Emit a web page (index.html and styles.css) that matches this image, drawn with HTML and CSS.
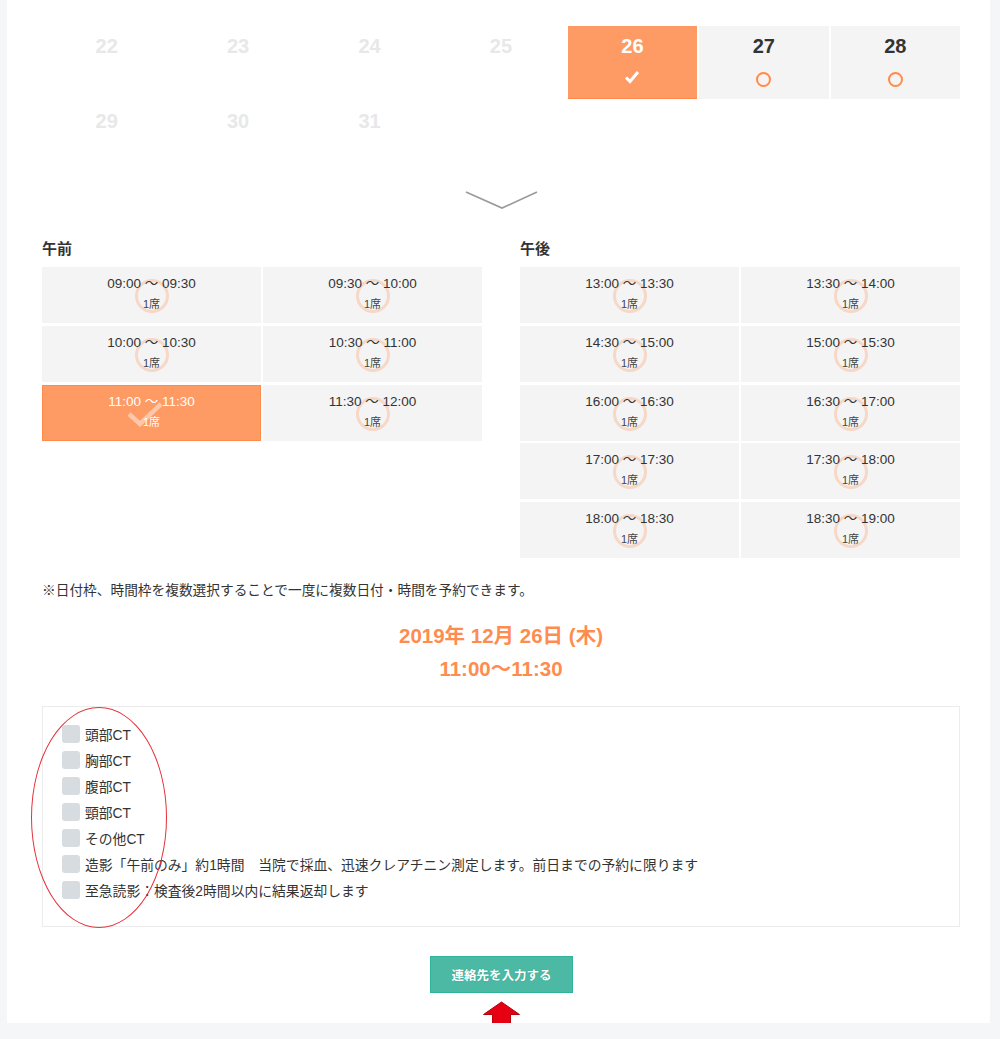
FILE: index.html
```html
<!DOCTYPE html>
<html lang="ja">
<head>
<meta charset="utf-8">
<title>予約</title>
<link rel="stylesheet" href="styles.css">
</head>
<body>
<div class="panel">
  <div class="calendar">
    <div class="day off"><span class="num">22</span></div>
    <div class="day off"><span class="num">23</span></div>
    <div class="day off"><span class="num">24</span></div>
    <div class="day off"><span class="num">25</span></div>
    <div class="day selected"><span class="num">26</span>
      <svg class="mark" width="16" height="14" viewBox="0 0 16 14"><path d="M2 7.5 L6 11.5 L14 2" fill="none" stroke="#fff" stroke-width="3"/></svg>
    </div>
    <div class="day open"><span class="num">27</span><span class="ring"></span></div>
    <div class="day open"><span class="num">28</span><span class="ring"></span></div>
    <div class="day off"><span class="num">29</span></div>
    <div class="day off"><span class="num">30</span></div>
    <div class="day off"><span class="num">31</span></div>
  </div>

  <div class="chevron">
    <svg width="74" height="20" viewBox="0 0 74 20"><path d="M1 2 L37 18 L72 2" fill="none" stroke="#9a9a9a" stroke-width="1.6"/></svg>
  </div>

  <div class="periods">
    <section class="period">
      <h3 class="period-title">午前</h3>
      <div class="slots">
        <div class="slot"><span class="time">09:00 〜 09:30</span><span class="seat">1席</span></div>
        <div class="slot"><span class="time">09:30 〜 10:00</span><span class="seat">1席</span></div>
        <div class="slot"><span class="time">10:00 〜 10:30</span><span class="seat">1席</span></div>
        <div class="slot"><span class="time">10:30 〜 11:00</span><span class="seat">1席</span></div>
        <div class="slot chosen"><span class="time">11:00 〜 11:30</span><span class="seat">1席</span>
          <svg class="bigcheck" width="44" height="30" viewBox="0 0 44 30"><path d="M3 12 L14 22 L35 2" fill="none" stroke="rgba(255,255,255,0.45)" stroke-width="4.5"/></svg>
        </div>
        <div class="slot"><span class="time">11:30 〜 12:00</span><span class="seat">1席</span></div>
      </div>
    </section>
    <section class="period">
      <h3 class="period-title">午後</h3>
      <div class="slots">
        <div class="slot"><span class="time">13:00 〜 13:30</span><span class="seat">1席</span></div>
        <div class="slot"><span class="time">13:30 〜 14:00</span><span class="seat">1席</span></div>
        <div class="slot"><span class="time">14:30 〜 15:00</span><span class="seat">1席</span></div>
        <div class="slot"><span class="time">15:00 〜 15:30</span><span class="seat">1席</span></div>
        <div class="slot"><span class="time">16:00 〜 16:30</span><span class="seat">1席</span></div>
        <div class="slot"><span class="time">16:30 〜 17:00</span><span class="seat">1席</span></div>
        <div class="slot"><span class="time">17:00 〜 17:30</span><span class="seat">1席</span></div>
        <div class="slot"><span class="time">17:30 〜 18:00</span><span class="seat">1席</span></div>
        <div class="slot"><span class="time">18:00 〜 18:30</span><span class="seat">1席</span></div>
        <div class="slot"><span class="time">18:30 〜 19:00</span><span class="seat">1席</span></div>
      </div>
    </section>
  </div>

  <p class="note">※日付枠、時間枠を複数選択することで一度に複数日付・時間を予約できます。</p>

  <div class="summary">
    <div>2019年 12月 26日 (木)</div>
    <div>11:00〜11:30</div>
  </div>

  <div class="options">
    <label class="opt"><span class="box"></span>頭部CT</label>
    <label class="opt"><span class="box"></span>胸部CT</label>
    <label class="opt"><span class="box"></span>腹部CT</label>
    <label class="opt"><span class="box"></span>頸部CT</label>
    <label class="opt"><span class="box"></span>その他CT</label>
    <label class="opt"><span class="box"></span>造影「午前のみ」約1時間　当院で採血、迅速クレアチニン測定します。前日までの予約に限ります</label>
    <label class="opt"><span class="box"></span>至急読影：検査後2時間以内に結果返却します</label>
    <span class="ellipse"></span>
  </div>

  <div class="actions">
    <button class="submit">連絡先を入力する</button>
    <svg class="arrow" width="39" height="30" viewBox="0 0 39 30"><path d="M19.5 1 L37.5 13.5 L28.5 13.5 L28.5 29 L10.5 29 L10.5 13.5 L1.5 13.5 Z" fill="#e60012" stroke="#b8000e" stroke-width="1"/></svg>
  </div>
</div>
</body>
</html>
```
FILE: styles.css
```css
html, body {
  margin: 0;
  padding: 0;
}
body {
  background: #f5f6f8;
  font-family: "Liberation Sans", "Noto Sans CJK JP", sans-serif;
  color: #333;
}
.panel {
  margin-left: 7px;
  width: 983px;
  box-sizing: border-box;
  background: #fff;
  padding: 26px 30px 30px 35px;
}

/* calendar */
.calendar {
  display: grid;
  grid-template-columns: repeat(7, 1fr);
  grid-auto-rows: 73px;
  gap: 2px;
}
.day {
  display: flex;
  flex-direction: column;
  align-items: center;
  padding-top: 9px;
  box-sizing: border-box;
}
.num {
  font-size: 20px;
  line-height: 22px;
  font-weight: bold;
}
.day.off .num { color: #e8e8e8; }
.day.open { background: #f4f4f4; }
.day.open .num { color: #333; }
.day.selected {
  background: #fe9a63;
  border-bottom: 1px solid #ff8a4c;
}
.day.selected .num { color: #fff; }
.ring {
  margin-top: 15px;
  width: 15px;
  height: 15px;
  box-sizing: border-box;
  border: 2px solid #ff8b4a;
  border-radius: 50%;
}
.mark { margin-top: 13px; }

.chevron {
  display: flex;
  justify-content: center;
  margin-top: 16px;
  height: 20px;
}
.chevron svg { margin-left: 2px; }

/* periods */
.periods {
  display: grid;
  grid-template-columns: 1fr 1fr;
  column-gap: 38px;
  margin-top: 29px;
  align-items: start;
}
.period-title {
  margin: 0 0 8px;
  font-size: 15px;
  line-height: 20px;
  font-weight: bold;
  color: #333;
}
.slots {
  display: grid;
  grid-template-columns: 1fr 1fr;
  grid-auto-rows: 56px;
  column-gap: 2px;
  row-gap: 2.75px;
}
.slot {
  position: relative;
  background: #f4f4f4;
  display: flex;
  flex-direction: column;
  align-items: center;
  padding-top: 9px;
  box-sizing: border-box;
}
.slot::before {
  content: "";
  position: absolute;
  top: 12px;
  left: 50%;
  width: 34px;
  height: 34px;
  margin-left: -17px;
  box-sizing: border-box;
  border: 3px solid rgba(255, 140, 80, 0.28);
  border-radius: 50%;
}
.time {
  position: relative;
  font-size: 13.5px;
  line-height: 16px;
  color: #333;
}
.seat {
  position: relative;
  margin-top: 5px;
  font-size: 11px;
  line-height: 14px;
  color: #444;
}
.slot.chosen {
  background: #fe9a63;
  border: 1px solid #ff8a4c;
  padding-top: 8px;
}
.slot.chosen::before { display: none; }
.slot.chosen .time, .slot.chosen .seat { color: #fff; }
.bigcheck {
  position: absolute;
  left: 50%;
  top: 16px;
  margin-left: -26px;
}

.note {
  margin: 25px 0 0;
  font-size: 13.7px;
  line-height: 16px;
  color: #333;
}

.summary {
  margin-top: 20px;
  text-align: center;
  color: #ff8c4f;
  font-weight: bold;
  font-size: 20.5px;
  line-height: 33px;
}

.options {
  position: relative;
  margin-top: 21px;
  border: 1px solid #ececec;
  padding: 14px 0 23px 19px;
  display: flex;
  flex-direction: column;
}
.opt {
  display: flex;
  align-items: center;
  height: 26px;
  font-size: 13.8px;
  color: #333;
}
.box {
  width: 18px;
  height: 18px;
  background: #d6dce0;
  border-radius: 3px;
  margin-right: 5px;
  flex: none;
}
.ellipse {
  position: absolute;
  left: -12px;
  top: 0;
  width: 136px;
  height: 221px;
  box-sizing: border-box;
  border: 1px solid #e5323c;
  border-radius: 50%;
}

.actions {
  position: relative;
  display: flex;
  justify-content: center;
  margin-top: 29px;
}
.submit {
  width: 143px;
  height: 37px;
  background: #4cb9a5;
  border: 1px solid #2fb39b;
  color: #fff;
  font-family: "Liberation Sans", "Noto Sans CJK JP", sans-serif;
  font-weight: bold;
  font-size: 12.5px;
  padding: 0;
  margin-left: 1px;
  text-shadow: 0 0 1px rgba(0, 80, 60, 0.35);
}
.arrow {
  position: absolute;
  left: 50%;
  top: 45px;
  margin-left: -19px;
}
```
